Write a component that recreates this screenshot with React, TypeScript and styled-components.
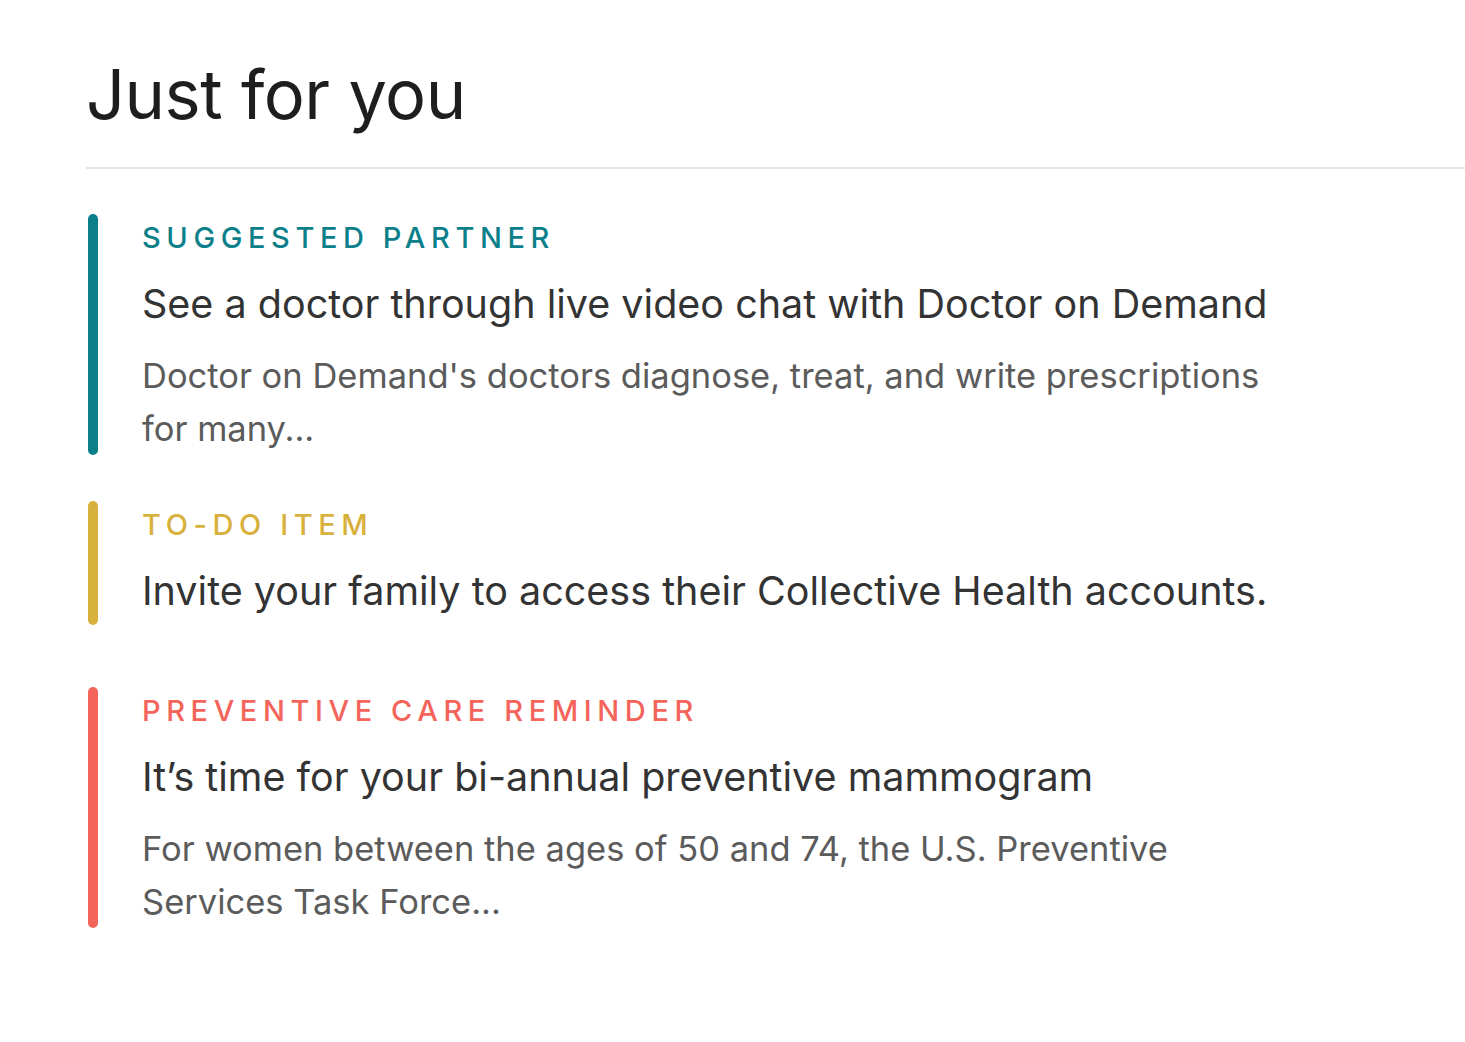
import React from "react";
import styled, { createGlobalStyle } from "styled-components";

const GlobalStyle = createGlobalStyle`
  html, body {
    margin: 0;
    padding: 0;
    background: #ffffff;
  }
  body {
    font-family: Inter, "Noto Sans", sans-serif;
    -webkit-font-smoothing: antialiased;
  }
`;

const Page = styled.main`
  padding: 53px 0 80px 86px;
  box-sizing: border-box;
  width: 100%;
`;

const Heading = styled.h1`
  margin: 0;
  font-family: Inter, "Noto Sans", sans-serif;
  font-weight: 400;
  font-size: 68.5px;
  line-height: 84px;
  color: #1e1e1e;
  letter-spacing: -0.5px;
`;

const Divider = styled.hr`
  margin: 30px 0 45px 0;
  border: none;
  height: 2px;
  background: #e4e7e7;
`;

const List = styled.ul`
  list-style: none;
  margin: 0 0 0 2px;
  padding: 0;
  display: flex;
  flex-direction: column;
  gap: 46px;
`;

const Item = styled.li<{ $extra?: boolean }>`
  display: flex;
  align-items: stretch;
  margin-bottom: ${(p) => (p.$extra ? "16px" : "0")};
`;

const Bar = styled.span<{ $color: string }>`
  flex: 0 0 10px;
  width: 10px;
  border-radius: 5px;
  background: ${(p) => p.$color};
`;

const Content = styled.div`
  display: flex;
  flex-direction: column;
  padding: 6px 0 0 44px;
  width: 1140px;
`;

const Label = styled.div<{ $color: string }>`
  font-size: 29px;
  line-height: 35px;
  font-weight: 500;
  letter-spacing: 5.6px;
  text-transform: uppercase;
  color: ${(p) => p.$color};
`;

const Title = styled.h2`
  margin: 23px 0 8px 0;
  font-size: 39.5px;
  line-height: 52px;
  font-weight: 400;
  color: #333333;
`;

const Description = styled.p`
  margin: 11px 0 0 0;
  font-size: 34.5px;
  line-height: 53px;
  font-weight: 400;
  color: #5b5b5b;
`;

type Card = {
  label: string;
  color: string;
  title: string;
  description?: string;
};

const cards: Card[] = [
  {
    label: "Suggested partner",
    color: "#0b808a",
    title: "See a doctor through live video chat with Doctor on Demand",
    description:
      "Doctor on Demand's doctors diagnose, treat, and write prescriptions for many...",
  },
  {
    label: "To-do item",
    color: "#d8b03c",
    title: "Invite your family to access their Collective Health accounts.",
  },
  {
    label: "Preventive care reminder",
    color: "#f4645a",
    title: "It\u2019s time for your bi-annual preventive mammogram",
    description:
      "For women between the ages of 50 and 74, the U.S. Preventive Services Task Force...",
  },
];

export default function App() {
  return (
    <>
      <GlobalStyle />
      <Page>
        <Heading>Just for you</Heading>
        <Divider />
        <List>
          {cards.map((c) => (
            <Item key={c.label} $extra={!c.description}>
              <Bar $color={c.color} />
              <Content>
                <Label $color={c.color}>{c.label}</Label>
                <Title>{c.title}</Title>
                {c.description && <Description>{c.description}</Description>}
              </Content>
            </Item>
          ))}
        </List>
      </Page>
    </>
  );
}
